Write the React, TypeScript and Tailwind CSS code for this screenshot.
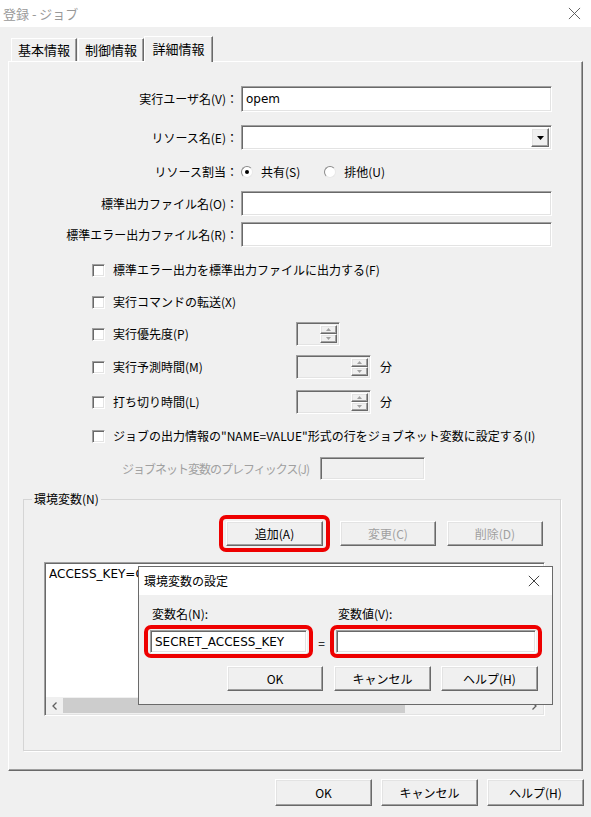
import React from 'react';

const sunken =
  'border border-t-[#a0a0a0] border-l-[#a0a0a0] border-b-white border-r-white shadow-[inset_1px_1px_0_#696969,inset_-1px_-1px_0_#e3e3e3]';
const raised =
  'border border-t-white border-l-white border-r-[#696969] border-b-[#696969] shadow-[inset_-1px_-1px_0_#a0a0a0,inset_1px_1px_0_#e3e3e3]';
const valueFont = "font-['DejaVu_Sans','Noto_Sans_CJK_JP',sans-serif]";

function Btn({
  label,
  w = 'w-[96px]',
  h = 'h-[25px]',
  disabled = false,
}: {
  label: string;
  w?: string;
  h?: string;
  disabled?: boolean;
}) {
  return (
    <div
      className={`${raised} ${w} ${h} bg-[#f0f0f0] flex items-center justify-center shrink-0 ${
        disabled ? 'text-[#a0a0a0]' : 'text-black'
      }`}
    >
      {label}
    </div>
  );
}

function RedBox({ children, className = '' }: { children: React.ReactNode; className?: string }) {
  return (
    <div className={`border-[4px] border-[#ee0000] rounded-[7px] flex items-center ${className}`}>
      {children}
    </div>
  );
}

function TextBox({ value = '', w, h = 'h-[25px]', bg = 'bg-white' }: { value?: string; w: string; h?: string; bg?: string }) {
  return (
    <div className={`${sunken} ${w} ${h} ${bg} ${valueFont} flex items-center pl-[4px] shrink-0 whitespace-nowrap overflow-hidden`}>
      {value}
    </div>
  );
}

function Check({ label }: { label: string }) {
  return (
    <div className="flex items-center">
      <div className={`${sunken} w-[13px] h-[13px] bg-white shrink-0`} />
      <span className="ml-[8px] whitespace-nowrap">{label}</span>
    </div>
  );
}

function Radio({ checked }: { checked?: boolean }) {
  return (
    <div className="w-[12px] h-[12px] rounded-full border border-t-[#8a8a8a] border-l-[#8a8a8a] border-r-[#e8e8e8] border-b-[#e8e8e8] bg-white flex items-center justify-center shrink-0">
      {checked && <div className="w-[4px] h-[4px] rounded-full bg-black" />}
    </div>
  );
}

function SpinArrow({ up }: { up?: boolean }) {
  return (
    <svg width="5" height="3" viewBox="0 0 5 3">
      <path d={up ? 'M2.5 0 L5 3 L0 3 Z' : 'M0 0 L5 0 L2.5 3 Z'} fill="#a0a0a0" />
    </svg>
  );
}

function Spinner({ w }: { w: string }) {
  return (
    <div className={`${sunken} ${w} h-[24px] bg-[#f0f0f0] flex justify-end p-[2px] shrink-0`}>
      <div className="flex flex-col w-[17px] h-full">
        <div className={`${raised} flex-1 flex items-center justify-center`}>
          <SpinArrow up />
        </div>
        <div className={`${raised} flex-1 flex items-center justify-center`}>
          <SpinArrow />
        </div>
      </div>
    </div>
  );
}

function CloseX({ size = 14, color = '#333' }: { size?: number; color?: string }) {
  return (
    <svg width={size} height={size} viewBox="0 0 14 14">
      <path d="M1 1 L13 13 M13 1 L1 13" stroke={color} strokeWidth="1" />
    </svg>
  );
}

function FieldRow({ label, children, className = '' }: { label: string; children: React.ReactNode; className?: string }) {
  return (
    <div className={`flex items-center ${className}`}>
      <div className="w-[229px] text-right whitespace-nowrap">{label}</div>
      <div className="ml-[3px] flex items-center">{children}</div>
    </div>
  );
}

function Tab({ label, selected }: { label: string; selected?: boolean }) {
  return (
    <div
      className={`border border-t-white border-l-white border-b-0 border-r-[#696969] shadow-[inset_-1px_0_0_#a0a0a0] bg-[#f0f0f0] flex items-center justify-center text-[13px] ${
        selected ? 'h-[26px] w-[69px] -mb-[1px] relative z-10 pb-[2px]' : 'h-[23px] w-[66px]'
      }`}
    >
      {label}
    </div>
  );
}

export default function App() {
  return (
    <div className="relative w-[591px] h-[817px] bg-[#f0f0f0] text-[12px] leading-[16px] text-black font-['Noto_Sans_CJK_JP',sans-serif] overflow-hidden">
      {/* window title */}
      <div className="h-[27px] bg-white flex items-center justify-between pl-[3px] pr-[10px]">
        <span className="text-[#999] text-[13px]">登録 - ジョブ</span>
        <CloseX size={13} color="#555" />
      </div>

      <div className="px-[8px] pt-[9px]">
        {/* tabs */}
        <div className="flex items-end h-[25px] pl-[3px]">
          <Tab label="基本情報" />
          <div className="w-[1px]" />
          <Tab label="制御情報" />
          <Tab label="詳細情報" selected />
        </div>

        {/* panel */}
        <div className="h-[710px] border border-t-white border-l-white border-r-[#696969] border-b-[#696969] shadow-[inset_-1px_-1px_0_#a0a0a0]">
          <div className="flex flex-col pt-[24px]">
            <FieldRow label="実行ユーザ名(V)：">
              <TextBox value="opem" w="w-[311px]" h="h-[26px]" />
            </FieldRow>
            <FieldRow label="リソース名(E)：" className="mt-[13px]">
              <div className={`${sunken} w-[311px] h-[25px] bg-white flex justify-end p-[2px]`}>
                <div className={`${raised} w-[18px] bg-[#f0f0f0] flex items-center justify-center`}>
                  <svg width="7" height="4" viewBox="0 0 7 4">
                    <path d="M0 0 L7 0 L3.5 4 Z" fill="#000" />
                  </svg>
                </div>
              </div>
            </FieldRow>
            <FieldRow label="リソース割当：" className="mt-[12px] h-[20px]">
              <div className="flex items-center">
                <Radio checked />
                <span className="ml-[8px]">共有(S)</span>
                <div className="ml-[24px]">
                  <Radio />
                </div>
                <span className="ml-[8px]">排他(U)</span>
              </div>
            </FieldRow>
            <FieldRow label="標準出力ファイル名(O)：" className="mt-[9px]">
              <TextBox w="w-[311px]" />
            </FieldRow>
            <FieldRow label="標準エラー出力ファイル名(R)：" className="mt-[6px]">
              <TextBox w="w-[311px]" />
            </FieldRow>

            {/* checkboxes */}
            <div className="flex flex-col pl-[83px]">
              <div className="h-[24px] mt-[11px] flex items-center">
                <Check label="標準エラー出力を標準出力ファイルに出力する(F)" />
              </div>
              <div className="h-[24px] mt-[8px] flex items-center">
                <Check label="実行コマンドの転送(X)" />
              </div>
              <div className="h-[24px] mt-[8px] flex items-center">
                <div className="w-[204px]">
                  <Check label="実行優先度(P)" />
                </div>
                <Spinner w="w-[44px]" />
              </div>
              <div className="h-[24px] mt-[9px] flex items-center">
                <div className="w-[204px]">
                  <Check label="実行予測時間(M)" />
                </div>
                <Spinner w="w-[75px]" />
                <span className="ml-[9px]">分</span>
              </div>
              <div className="h-[24px] mt-[11px] flex items-center">
                <div className="w-[204px]">
                  <Check label="打ち切り時間(L)" />
                </div>
                <Spinner w="w-[75px]" />
                <span className="ml-[9px]">分</span>
              </div>
              <div className="h-[24px] mt-[10px] flex items-center">
                <Check label='ジョブの出力情報の"NAME=VALUE"形式の行をジョブネット変数に設定する(I)' />
              </div>
              <div className="h-[23px] mt-[9px] flex items-center pl-[30px]">
                <span className="w-[198px] text-[#a0a0a0] whitespace-nowrap tracking-[-1px]">ジョブネット変数のプレフィックス(J)</span>
                <TextBox w="w-[105px]" h="h-[23px]" bg="bg-[#f0f0f0]" />
              </div>
            </div>

            {/* environment variables group */}
            <div className="relative ml-[14px] mt-[19px] w-[538px] h-[252px] border border-[#d5d5d5] shadow-[1px_1px_0_white]">
              <span className="absolute -top-[9px] left-[8px] bg-[#f0f0f0] px-[2px]">環境変数(N)</span>
              <div className="flex items-center justify-end pr-[17px] pt-[15px]">
                <RedBox className="px-[3px] py-[2px]">
                  <Btn label="追加(A)" w="w-[97px]" />
                </RedBox>
                <div className="ml-[10px]">
                  <Btn label="変更(C)" disabled />
                </div>
                <div className="ml-[11px]">
                  <Btn label="削除(D)" disabled />
                </div>
              </div>
              <div className={`${sunken} ml-[20px] mt-[10px] w-[501px] h-[154px] bg-white flex flex-col p-[1px] overflow-hidden`}>
                <div className="flex-1 pl-[3px] pt-[2px]">
                  <div className={`${valueFont} w-[90px] overflow-hidden whitespace-nowrap`}>ACCESS_KEY=G</div>
                </div>
                <div className="h-[17px] bg-[#f0f0f0] flex items-center">
                  <div className="w-[17px] flex justify-center">
                    <svg width="5" height="8" viewBox="0 0 5 8">
                      <path d="M4.5 0.5 L1 4 L4.5 7.5" stroke="#606060" strokeWidth="1.3" fill="none" />
                    </svg>
                  </div>
                  <div className="flex-1 h-full flex items-center">
                    <div className="w-[342px] h-[15px] bg-[#cdcdcd]" />
                  </div>
                  <div className="w-[17px] flex justify-center">
                    <svg width="5" height="8" viewBox="0 0 5 8">
                      <path d="M0.5 0.5 L4 4 L0.5 7.5" stroke="#606060" strokeWidth="1.3" fill="none" />
                    </svg>
                  </div>
                </div>
              </div>
            </div>
          </div>
        </div>

        {/* bottom buttons */}
        <div className="flex justify-end mt-[8px] mr-[-1px]">
          <Btn label="OK" w="w-[97px]" h="h-[27px]" />
          <div className="ml-[9px]">
            <Btn label="キャンセル" w="w-[97px]" h="h-[27px]" />
          </div>
          <div className="ml-[9px]">
            <Btn label="ヘルプ(H)" w="w-[97px]" h="h-[27px]" />
          </div>
        </div>
      </div>

      {/* 環境変数の設定 sub dialog */}
      <div className="absolute left-[138px] top-[566px] w-[415px] h-[139px] border border-[#6a6a6a] bg-[#f0f0f0] flex flex-col">
        <div className="h-[28px] bg-white flex items-center justify-between pl-[5px] pr-[12px]">
          <span>環境変数の設定</span>
          <CloseX size={12} color="#222" />
        </div>
        <div className="flex pl-[5px] pt-[11px]">
          <div className="flex flex-col">
            <span className="pl-[8px]">変数名(N):</span>
            <RedBox className="mt-[3px] w-[169px] h-[33px] pl-[2px]">
              <TextBox value="SECRET_ACCESS_KEY" w="w-[157px]" h="h-[23px]" />
            </RedBox>
          </div>
          <div className="w-[17px] flex items-end justify-center pb-[7px]">=</div>
          <div className="flex flex-col">
            <span className="pl-[8px]">変数値(V):</span>
            <RedBox className="mt-[3px] w-[212px] h-[33px] pl-[2px]">
              <TextBox w="w-[200px]" h="h-[23px]" />
            </RedBox>
          </div>
        </div>
        <div className="flex justify-end pr-[14px] mt-[8px]">
          <Btn label="OK" />
          <div className="ml-[11px]">
            <Btn label="キャンセル" w="w-[97px]" />
          </div>
          <div className="ml-[10px]">
            <Btn label="ヘルプ(H)" w="w-[97px]" />
          </div>
        </div>
      </div>
    </div>
  );
}
